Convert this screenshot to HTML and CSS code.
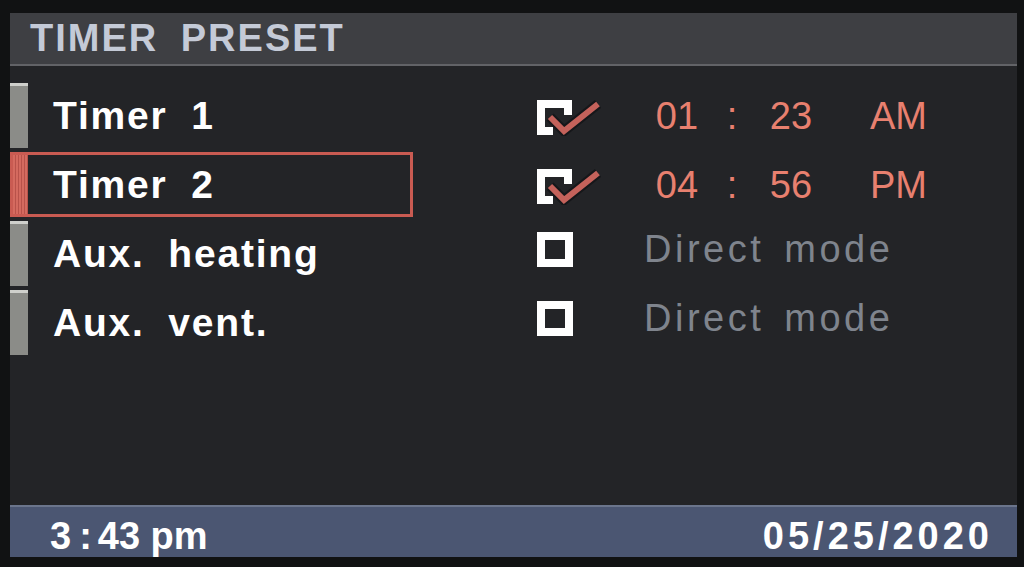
FILE: index.html
```html
<!DOCTYPE html>
<html>
<head>
<meta charset="utf-8">
<link rel="stylesheet" href="styles.css">
</head>
<body>
<div class="screen">
  <header class="title">TIMER PRESET</header>
  <div class="list">
    <div class="row">
      <div class="item"><div class="bar"></div><div class="label">Timer 1</div></div>
      <div class="spacer"></div>
      <svg class="check" width="64" height="36" viewBox="0 0 64 36"><path class="box" d="M0 0H35V15H27V8H8V27H16V35H0Z"/><polyline class="tick-outline" points="13,17 27,31 61,4"/><polyline class="tick" points="13,17 27,31 61,4"/></svg>
      <div class="value time"><span>01</span><span>:</span><span>23</span><span class="ampm">AM</span></div>
    </div>
    <div class="row selected">
      <div class="item"><div class="bar"></div><div class="label">Timer 2</div></div>
      <div class="spacer"></div>
      <svg class="check" width="64" height="36" viewBox="0 0 64 36"><path class="box" d="M0 0H35V15H27V8H8V27H16V35H0Z"/><polyline class="tick-outline" points="13,17 27,31 61,4"/><polyline class="tick" points="13,17 27,31 61,4"/></svg>
      <div class="value time"><span>04</span><span>:</span><span>56</span><span class="ampm">PM</span></div>
    </div>
    <div class="row">
      <div class="item"><div class="bar"></div><div class="label">Aux. heating</div></div>
      <div class="spacer"></div>
      <div class="checkbox"><div class="empty"></div></div>
      <div class="value mode">Direct mode</div>
    </div>
    <div class="row">
      <div class="item"><div class="bar"></div><div class="label">Aux. vent.</div></div>
      <div class="spacer"></div>
      <div class="checkbox"><div class="empty"></div></div>
      <div class="value mode">Direct mode</div>
    </div>
  </div>
  <footer class="status">
    <span class="clock">3<span class="sep">:</span>43 pm</span>
    <span class="date">05/25/2020</span>
  </footer>
</div>
</body>
</html>
```

FILE: styles.css
```css
html, body {
  margin: 0;
  height: 567px;
  overflow: hidden;
}
body {
  background: #111213;
  padding: 13px 7px 10px 10px;
  box-sizing: border-box;
}
.screen {
  height: 544px;
  background: #232427;
  display: flex;
  flex-direction: column;
  font-family: "Liberation Sans", Arial, sans-serif;
}
.title {
  height: 51px;
  background: #3e3f43;
  border-bottom: 2px solid #626367;
  color: #c4cad7;
  font-weight: bold;
  font-size: 38px;
  letter-spacing: 2px;
  word-spacing: 10px;
  line-height: 51px;
  padding-left: 20px;
  box-sizing: content-box;
}
.list {
  padding-top: 17px;
  display: flex;
  flex-direction: column;
  gap: 4px;
  flex: 1;
}
.row {
  display: grid;
  grid-template-columns: 403px 124px 64px 1fr;
  height: 65px;
  align-items: center;
}
.item {
  display: flex;
  height: 100%;
  box-sizing: border-box;
  align-items: stretch;
}
.bar {
  width: 18px;
  background: #8b8c88;
  border-top: 3px solid #cfd0cc;
  box-sizing: border-box;
}
.label {
  padding-left: 25px;
  display: flex;
  align-items: center;
  color: #ffffff;
  font-weight: bold;
  font-size: 39px;
  letter-spacing: 1.8px;
  word-spacing: 11px;
}
.selected .item {
  border: 3px solid #c95b52;
}
.selected .bar {
  width: 15px;
  border-top: none;
  background: repeating-linear-gradient(90deg, #d46a5f 0 2px, #b8524a 2px 3px);
}
.check {
  display: block;
  margin-top: 4px;
}
.check .box { fill: #ffffff; }
.check .tick-outline {
  fill: none;
  stroke: #16171a;
  stroke-width: 10;
}
.check .tick {
  fill: none;
  stroke: #c4625b;
  stroke-width: 6;
}
.checkbox {
  display: flex;
  align-items: center;
}
.empty {
  width: 36px;
  height: 35px;
  border: 8px solid #ffffff;
  box-sizing: border-box;
  margin-top: -8px;
}
.value {
  padding-left: 40px;
  font-size: 38px;
}
.time {
  display: grid;
  grid-template-columns: 72px 38px 80px auto;
  justify-items: center;
  color: #e8806f;
  margin-top: 2px;
}
.time .ampm {
  justify-self: start;
  padding-left: 39px;
}
.mode {
  padding-left: 43px;
  color: #7f848d;
  letter-spacing: 3.5px;
  word-spacing: 6px;
  margin-top: -9px;
}
.status {
  height: 52px;
  background: #4b5672;
  border-top: 2px solid #6b758c;
  box-sizing: border-box;
  display: flex;
  justify-content: space-between;
  align-items: center;
  padding: 8px 24px 0 40px;
  color: #ffffff;
  font-weight: bold;
  font-size: 38px;
}
.clock .sep {
  margin: 0 6px 0 8px;
}
.date {
  letter-spacing: 4px;
}
```
